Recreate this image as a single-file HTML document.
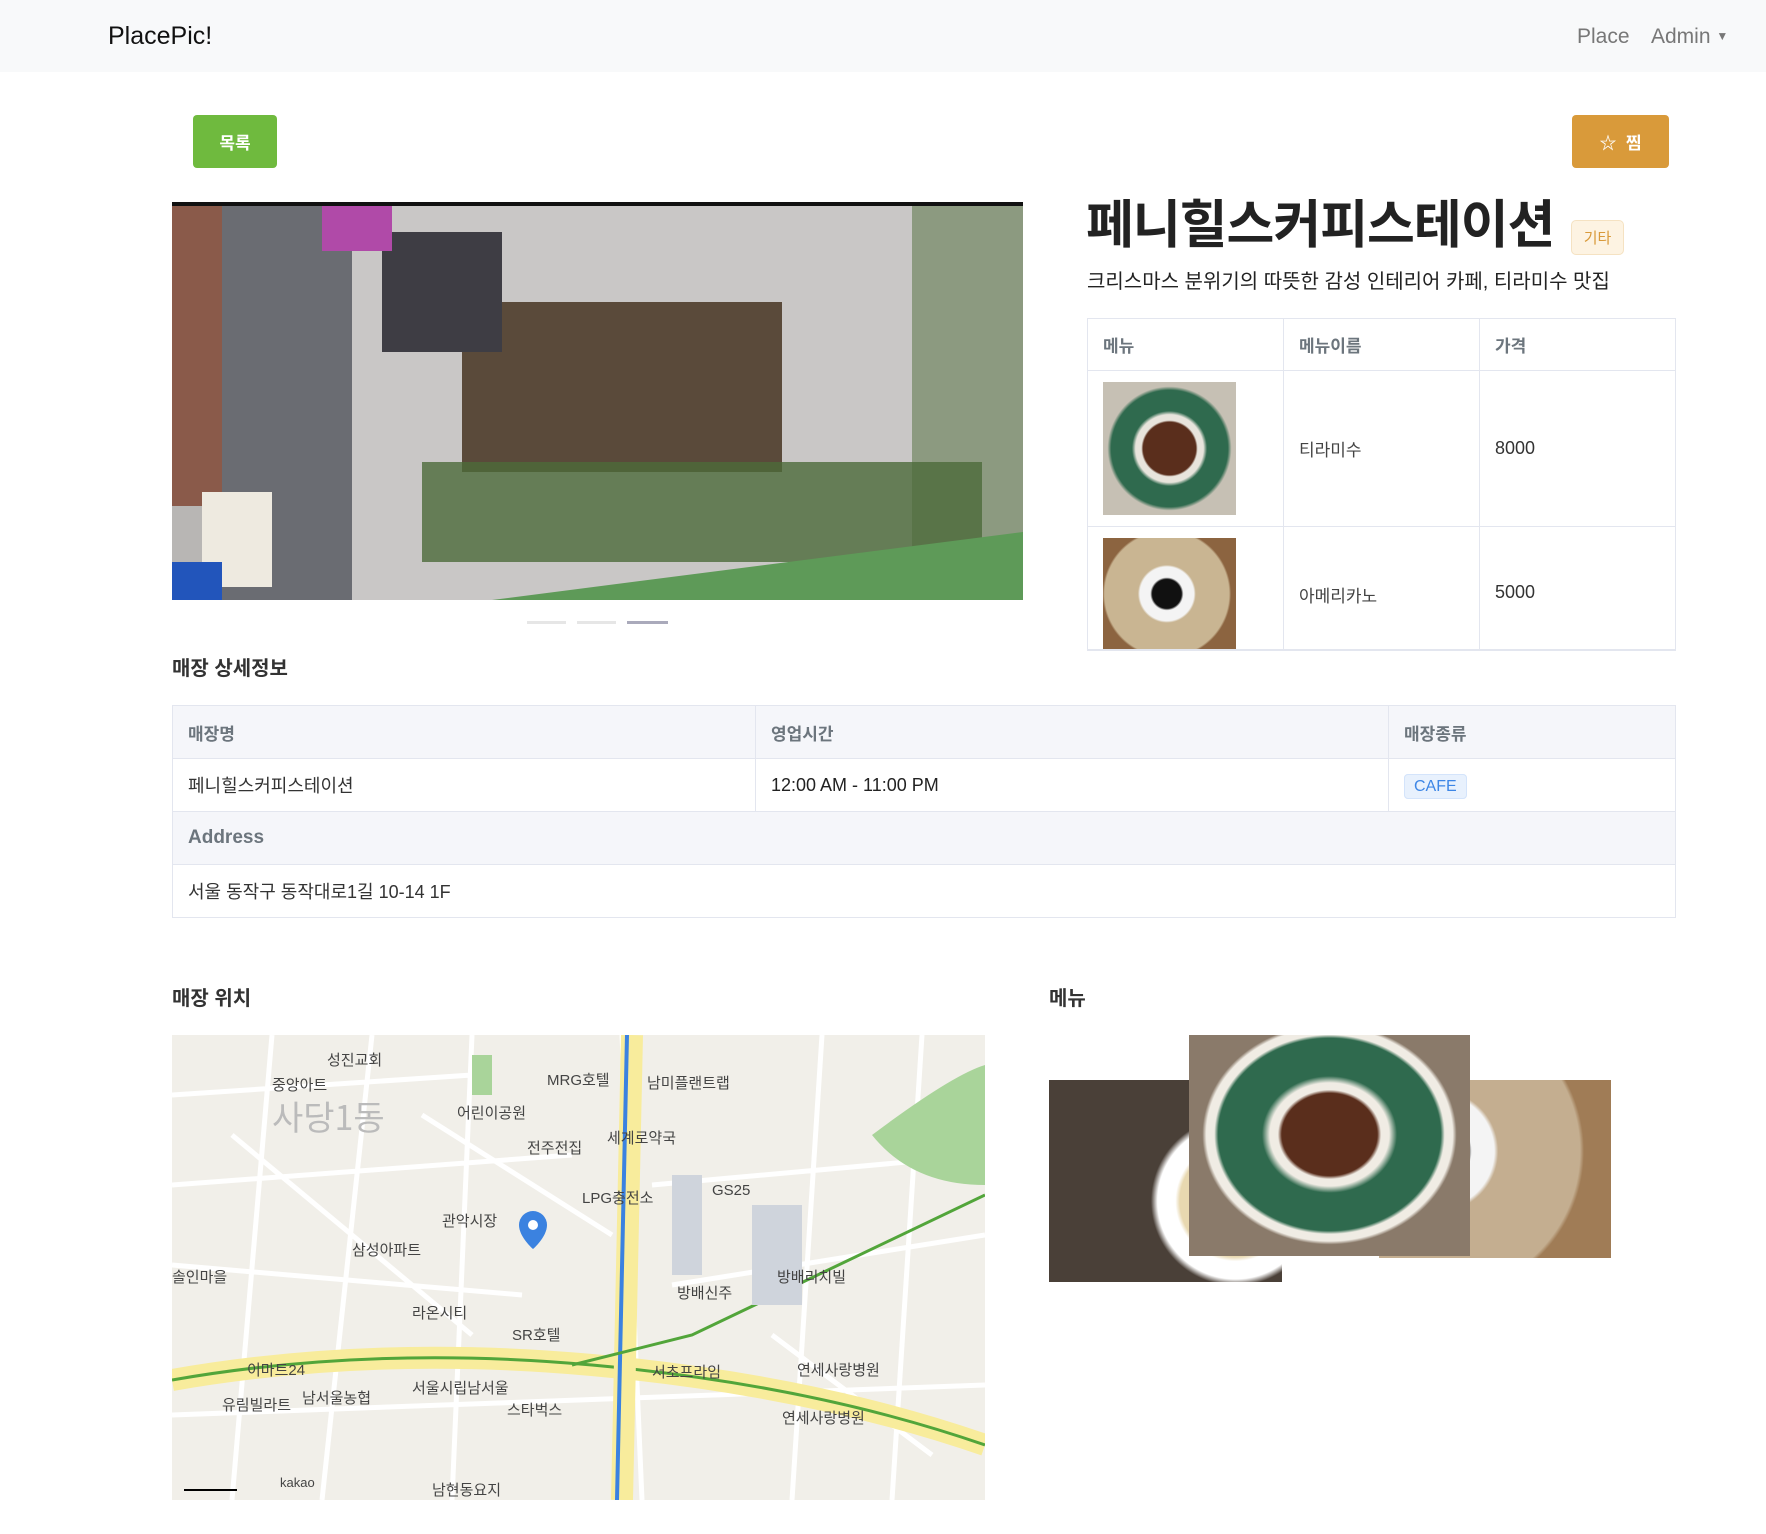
<!DOCTYPE html>
<html><head><meta charset="utf-8"><style>
*{box-sizing:border-box;margin:0;padding:0}
body{width:1766px;height:1534px;background:#fff;font-family:"Liberation Sans","Noto Sans CJK KR",sans-serif;color:#212529;position:relative;overflow:hidden}
.abs{position:absolute}
nav{position:absolute;left:0;top:0;width:1766px;height:72px;background:#f8f9fa}
.btn{position:absolute;border-radius:4px;color:#fff;font-size:17px;font-weight:bold;display:flex;align-items:center;justify-content:center}
table{border-collapse:collapse;position:absolute}
td,th{border:1px solid #e3e6ef;text-align:left;font-weight:normal}
th{color:#6c757d;font-weight:bold;font-size:17px}
</style></head><body>
<nav>
<div class="abs" style="left:108px;top:22px;font-size:25px;color:#111">PlacePic!</div>
<div class="abs" style="left:1577px;top:25px;font-size:21px;color:#777">Place</div>
<div class="abs" style="left:1651px;top:25px;font-size:21px;color:#777">Admin <span style="font-size:12px;vertical-align:3px">&#9660;</span></div>
</nav>
<div class="btn" style="left:193px;top:115px;width:84px;height:53px;background:#6fba3e">목록</div>
<div class="btn" style="left:1572px;top:115px;width:97px;height:53px;background:#d99a3a">&#9734;&nbsp; 찜</div>

<svg class="abs" style="left:172px;top:202px" width="851" height="398" viewBox="0 0 851 398">
<rect width="851" height="398" fill="#b8b6b4"/>
<rect width="851" height="4" fill="#111"/>
<rect x="0" y="4" width="50" height="300" fill="#8a5a4a"/>
<rect x="50" y="4" width="130" height="394" fill="#6a6c72"/>
<rect x="180" y="4" width="560" height="394" fill="#c9c7c6"/>
<rect x="290" y="100" width="320" height="170" fill="#5a4a3a"/>
<rect x="210" y="30" width="120" height="120" fill="#3e3d44"/>
<rect x="150" y="4" width="70" height="45" fill="#b04aa8"/>
<rect x="740" y="4" width="111" height="394" fill="#8c9a80"/>
<rect x="30" y="290" width="70" height="95" fill="#eeeae0"/>
<rect x="250" y="260" width="560" height="100" fill="#4c6a3a" opacity=".8"/>
<polygon points="320,398 851,330 851,398" fill="#5e9a58"/>
<rect x="0" y="360" width="50" height="38" fill="#2255bb"/>
</svg>
<div class="abs" style="left:527px;top:621px;width:39px;height:3px;background:#e6e6e6"></div>
<div class="abs" style="left:577px;top:621px;width:39px;height:3px;background:#e6e6e6"></div>
<div class="abs" style="left:627px;top:621px;width:41px;height:3px;background:#aab"></div>

<div class="abs" style="left:1086px;top:183px;font-size:52px;font-weight:bold;color:#222;letter-spacing:-1px;white-space:nowrap">페니힐스커피스테이션</div>
<div class="abs" style="left:1571px;top:220px;width:53px;height:35px;background:#fdf3e2;border:1px solid #f5e2c2;border-radius:5px;color:#d99a3a;font-size:15px;display:flex;align-items:center;justify-content:center">기타</div>
<div class="abs" style="left:1087px;top:265px;font-size:20px;color:#222;white-space:nowrap">크리스마스 분위기의 따뜻한 감성 인테리어 카페, 티라미수 맛집</div>

<div class="abs" style="left:1087px;top:318px;width:589px;height:333px;overflow:hidden">
<table style="left:0;top:0;width:589px">
<tr style="height:52px"><th style="width:196px;padding-left:15px">메뉴</th><th style="width:196px;padding-left:15px">메뉴이름</th><th style="padding-left:15px">가격</th></tr>
<tr style="height:156px"><td style="padding-left:15px"><div style="width:133px;height:133px;background:radial-gradient(circle at 50% 50%,#5a2e1c 0 28%,#e8e4dc 30% 36%,#2f6a4e 40% 62%,#c6c0b4 66%)"></div></td><td style="padding-left:15px;font-size:17px;color:#444">티라미수</td><td style="padding-left:15px;font-size:18px;color:#333">8000</td></tr>
<tr style="height:156px"><td style="padding-left:15px;vertical-align:top;padding-top:11px"><div style="width:133px;height:133px;background:radial-gradient(circle at 48% 42%,#111 0 14%,#f4f4f4 16% 26%,#c9b592 28% 60%,#8c6440 62%)"></div></td><td style="padding-left:15px;font-size:17px;color:#444;vertical-align:top;padding-top:55px">아메리카노</td><td style="padding-left:15px;font-size:18px;color:#333;vertical-align:top;padding-top:55px">5000</td></tr>
</table>
<div class="abs" style="left:0;top:331px;width:589px;height:2px;background:#e3e6ef"></div>
</div>

<div class="abs" style="left:172px;top:652px;font-size:20px;font-weight:bold;color:#333">매장 상세정보</div>
<table style="left:172px;top:705px;width:1504px;font-size:18px">
<tr style="height:53px;background:#f5f6fa"><th style="width:583px;padding-left:15px">매장명</th><th style="width:633px;padding-left:15px">영업시간</th><th style="padding-left:15px">매장종류</th></tr>
<tr style="height:53px"><td style="padding-left:15px;color:#333">페니힐스커피스테이션</td><td style="padding-left:15px;color:#222">12:00 AM - 11:00 PM</td><td style="padding-left:15px"><span style="background:#e8f1fd;border:1px solid #d4e4fb;color:#3d86e6;font-size:16px;padding:3px 9px;border-radius:4px">CAFE</span></td></tr>
<tr style="height:53px;background:#f5f6fa"><th colspan="3" style="padding-left:15px;font-size:19px">Address</th></tr>
<tr style="height:53px"><td colspan="3" style="padding-left:15px;color:#333">서울 동작구 동작대로1길 10-14 1F</td></tr>
</table>

<div class="abs" style="left:172px;top:982px;font-size:20px;font-weight:bold;color:#333">매장 위치</div>
<div class="abs" style="left:1049px;top:982px;font-size:20px;font-weight:bold;color:#333">메뉴</div>

<svg class="abs" style="left:172px;top:1035px" width="813" height="465" viewBox="0 0 813 465">
<rect width="813" height="465" fill="#f1efe9"/>
<g stroke="#fff" stroke-width="5" fill="none">
<path d="M0 60L300 40M0 150L400 120M0 230L350 260M100 0L60 465M200 0L150 465M300 0L280 465M450 0L470 465M650 0L620 465M750 0L720 465M0 380L813 350M480 150L813 120M500 250L813 200M60 100L300 300M250 80L440 200M600 300L760 420"/>
</g>
<path d="M0 345Q200 310 420 330T813 410" stroke="#f8ec9c" stroke-width="22" fill="none"/>
<path d="M0 345Q200 310 420 330T813 410" stroke="#52a53a" stroke-width="3" fill="none"/>
<path d="M460 0L450 465" stroke="#f8ec9c" stroke-width="22"/>
<path d="M455 0L445 465" stroke="#3b82e0" stroke-width="4"/>
<path d="M400 330L520 300L813 160" stroke="#52a53a" stroke-width="3" fill="none"/>
<path d="M700 100Q780 40 813 30L813 150Q740 150 700 100" fill="#a9d49a"/>
<rect x="300" y="20" width="20" height="40" fill="#a9d49a"/>
<rect x="500" y="140" width="30" height="100" fill="#cfd4dc"/>
<rect x="580" y="170" width="50" height="100" fill="#cfd4dc"/>
<g font-size="15" fill="#444" font-family="Liberation Sans,Noto Sans CJK KR,sans-serif">
<text x="155" y="30">성진교회</text><text x="100" y="55">중앙아트</text><text x="375" y="50">MRG호텔</text><text x="475" y="53">남미플랜트랩</text>
<text x="285" y="83">어린이공원</text><text x="355" y="118">전주전집</text><text x="435" y="108">세계로약국</text><text x="410" y="168">LPG충전소</text>
<text x="540" y="160">GS25</text><text x="270" y="191">관악시장</text><text x="180" y="220">삼성아파트</text><text x="0" y="247">솔인마을</text>
<text x="605" y="247">방배리치빌</text><text x="505" y="263">방배신주</text><text x="240" y="283">라온시티</text><text x="340" y="305">SR호텔</text>
<text x="75" y="340">이마트24</text><text x="480" y="342">서초프라임</text><text x="625" y="340">연세사랑병원</text><text x="130" y="368">남서울농협</text>
<text x="240" y="358">서울시립남서울</text><text x="335" y="380">스타벅스</text><text x="50" y="375">유림빌라트</text><text x="610" y="388">연세사랑병원</text>
<text x="260" y="460">남현동요지</text><text x="108" y="452" font-size="13">kakao</text>
</g>
<text x="100" y="95" font-size="34" fill="#bbb" font-family="Noto Sans CJK KR,sans-serif">사당1동</text>
<path d="M361 176a14 14 0 0 1 14 14c0 12-14 24-14 24s-14-12-14-24a14 14 0 0 1 14-14z" fill="#3b82e0"/>
<circle cx="361" cy="190" r="5" fill="#fff"/>
<path d="M12 455H65" stroke="#000" stroke-width="2"/>
</svg>

<div class="abs" style="left:1049px;top:1080px;width:233px;height:202px;background:radial-gradient(circle at 80% 60%,#e8d8b0 0 25%,#fff 27% 35%,#4a4038 38%)"></div>
<div class="abs" style="left:1379px;top:1080px;width:232px;height:178px;background:radial-gradient(circle at 25% 40%,#222 0 15%,#f4f4f4 17% 28%,#c4ae90 30% 70%,#a07c56 72%)"></div>
<div class="abs" style="left:1189px;top:1035px;width:281px;height:221px;background:radial-gradient(ellipse at 50% 45%,#5a2e1c 0 24%,#f0ece4 26% 30%,#2f6a4e 34% 56%,#f0ece4 58% 62%,#8a7a6a 64%)"></div>
</body></html>
